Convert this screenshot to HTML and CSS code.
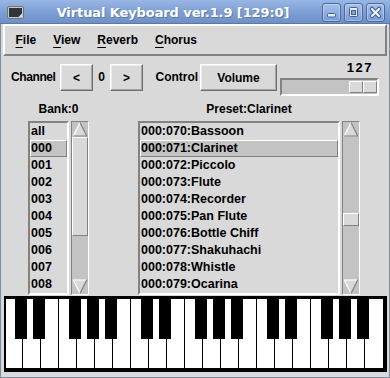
FILE: index.html
```html
<!DOCTYPE html>
<html>
<head>
<meta charset="utf-8">
<link rel="stylesheet" href="styles.css">
</head>
<body>
<div class="window">
  <div class="titlebar">
    <svg class="winicon" viewBox="0 0 17 13" width="17" height="13">
      <rect x="0.5" y="0.5" width="16" height="12" rx="1.5" fill="#c4c8cc" stroke="#6f757c"/>
      <rect x="2" y="2" width="13" height="9" fill="#30353a"/>
      <path d="M11.5 11 L15 7.5 L15 11 Z" fill="#d8dbde"/>
    </svg>
    <div class="title">Virtual Keyboard ver.1.9 [129:0]</div>
    <div class="wbtns">
      <div class="wbtn">
        <svg viewBox="0 0 17 17" width="17" height="17"><rect x="4.5" y="9.5" width="8" height="3.5" rx="1" fill="#e9eef8" stroke="#41609a"/></svg>
      </div>
      <div class="wbtn">
        <svg viewBox="0 0 17 17" width="17" height="17"><rect x="4.5" y="3.5" width="8" height="9" rx="1" fill="#e9eef8" stroke="#41609a"/><rect x="6.5" y="6.5" width="4" height="4" fill="#82a2d8" stroke="#41609a"/></svg>
      </div>
      <div class="wbtn">
        <svg viewBox="0 0 17 17" width="17" height="17"><path d="M5 5 L12 12 M12 5 L5 12" stroke="#41609a" stroke-width="4.5" stroke-linecap="round"/><path d="M5 5 L12 12 M12 5 L5 12" stroke="#e9eef8" stroke-width="2.4" stroke-linecap="round"/></svg>
      </div>
    </div>
  </div>

  <div class="menubar">
    <span class="menu"><u>F</u>ile</span>
    <span class="menu"><u>V</u>iew</span>
    <span class="menu"><u>R</u>everb</span>
    <span class="menu"><u>C</u>horus</span>
  </div>

  <div class="main">
    <div class="controls">
      <span class="lbl lbl-channel">Channel</span>
      <div class="btn btn-small">&lt;</div>
      <span class="lbl lbl-value">0</span>
      <div class="btn btn-small">&gt;</div>
      <span class="lbl lbl-control">Control</span>
      <div class="btn btn-volume">Volume</div>
      <div class="scale">
        <div class="scale-value">127</div>
        <div class="scale-trough">
          <div class="scale-thumb"><span class="half"></span><span class="half"></span></div>
        </div>
      </div>
    </div>

    <div class="lists">
      <div class="col">
        <div class="col-label">Bank:0</div>
        <div class="col-body">
          <div class="listbox lb-bank">
            <div class="row">all</div>
            <div class="row sel">000</div>
            <div class="row">001</div>
            <div class="row">002</div>
            <div class="row">003</div>
            <div class="row">004</div>
            <div class="row">005</div>
            <div class="row">006</div>
            <div class="row">007</div>
            <div class="row">008</div>
          </div>
          <div class="scrollbar">
            <svg class="arrow" viewBox="0 0 16 15" width="16" height="15"><polygon points="1,14.5 8,0.5 15,14.5" fill="#d9d9d9"/><path d="M1 14.5 L8 0.5" stroke="#fff" stroke-width="1.2"/><path d="M8 0.5 L15 14.5 M1 14 L15 14" stroke="#828282" stroke-width="1.2"/></svg>
            <div class="sb-trough"><div class="sb-thumb thumb-bank"></div></div>
            <svg class="arrow" viewBox="0 0 16 15" width="16" height="15"><polygon points="1,0.5 15,0.5 8,14.5" fill="#d9d9d9"/><path d="M1 1 L15 1 M1 0.5 L8 14.5" stroke="#fff" stroke-width="1.2"/><path d="M15 0.5 L8 14.5" stroke="#828282" stroke-width="1.2"/></svg>
          </div>
        </div>
      </div>

      <div class="col">
        <div class="col-label">Preset:Clarinet</div>
        <div class="col-body">
          <div class="listbox lb-preset">
            <div class="row">000:070:Bassoon</div>
            <div class="row sel">000:071:Clarinet</div>
            <div class="row">000:072:Piccolo</div>
            <div class="row">000:073:Flute</div>
            <div class="row">000:074:Recorder</div>
            <div class="row">000:075:Pan Flute</div>
            <div class="row">000:076:Bottle Chiff</div>
            <div class="row">000:077:Shakuhachi</div>
            <div class="row">000:078:Whistle</div>
            <div class="row">000:079:Ocarina</div>
          </div>
          <div class="scrollbar">
            <svg class="arrow" viewBox="0 0 16 15" width="16" height="15"><polygon points="1,14.5 8,0.5 15,14.5" fill="#d9d9d9"/><path d="M1 14.5 L8 0.5" stroke="#fff" stroke-width="1.2"/><path d="M8 0.5 L15 14.5 M1 14 L15 14" stroke="#828282" stroke-width="1.2"/></svg>
            <div class="sb-trough"><div class="sb-thumb thumb-preset"></div></div>
            <svg class="arrow" viewBox="0 0 16 15" width="16" height="15"><polygon points="1,0.5 15,0.5 8,14.5" fill="#d9d9d9"/><path d="M1 1 L15 1 M1 0.5 L8 14.5" stroke="#fff" stroke-width="1.2"/><path d="M15 0.5 L8 14.5" stroke="#828282" stroke-width="1.2"/></svg>
          </div>
        </div>
      </div>
    </div>

    <svg class="keyboard" viewBox="0 0 383 76" width="383" height="76">
      <rect x="0" y="0" width="383" height="76" fill="#000"/>
      <rect x="2" y="3" width="377" height="69" fill="#fff"/>
      <g fill="#000">
        <rect x="18" y="3" width="1" height="69"/>
        <rect x="36" y="3" width="1" height="69"/>
        <rect x="54" y="3" width="1" height="69"/>
        <rect x="72" y="3" width="1" height="69"/>
        <rect x="90" y="3" width="1" height="69"/>
        <rect x="108" y="3" width="1" height="69"/>
        <rect x="126" y="3" width="1" height="69"/>
        <rect x="144" y="3" width="1" height="69"/>
        <rect x="162" y="3" width="1" height="69"/>
        <rect x="180" y="3" width="1" height="69"/>
        <rect x="198" y="3" width="1" height="69"/>
        <rect x="216" y="3" width="1" height="69"/>
        <rect x="234" y="3" width="1" height="69"/>
        <rect x="252" y="3" width="1" height="69"/>
        <rect x="270" y="3" width="1" height="69"/>
        <rect x="288" y="3" width="1" height="69"/>
        <rect x="306" y="3" width="1" height="69"/>
        <rect x="324" y="3" width="1" height="69"/>
        <rect x="342" y="3" width="1" height="69"/>
        <rect x="360" y="3" width="1" height="69"/>
      </g>
      <g fill="#000">
        <rect x="11" y="0" width="12" height="43"/>
        <rect x="29" y="0" width="12" height="43"/>
        <rect x="65" y="0" width="12" height="43"/>
        <rect x="83" y="0" width="12" height="43"/>
        <rect x="101" y="0" width="12" height="43"/>
        <rect x="137" y="0" width="12" height="43"/>
        <rect x="155" y="0" width="12" height="43"/>
        <rect x="191" y="0" width="12" height="43"/>
        <rect x="209" y="0" width="12" height="43"/>
        <rect x="227" y="0" width="12" height="43"/>
        <rect x="263" y="0" width="12" height="43"/>
        <rect x="281" y="0" width="12" height="43"/>
        <rect x="317" y="0" width="12" height="43"/>
        <rect x="335" y="0" width="12" height="43"/>
        <rect x="353" y="0" width="12" height="43"/>
      </g>
    </svg>
  </div>
</div>
</body>
</html>
```

FILE: styles.css
```css
html, body {
  margin: 0;
  padding: 0;
  background: #d9d9d9;
}

.window {
  width: 390px;
  height: 378px;
  display: flex;
  flex-direction: column;
  background: #d9d9d9;
  box-shadow: inset 1px 0 #7c8aa3, inset -1px 0 #7c8aa3, inset 0 -1px #7c8aa3;
  font-family: "Liberation Sans", Arial, sans-serif;
  font-weight: bold;
  font-size: 12px;
  color: #000;
  overflow: hidden;
}

/* ---------- title bar ---------- */
.titlebar {
  height: 24px;
  flex: none;
  display: flex;
  align-items: center;
  background: linear-gradient(#98b6e5, #7b9dd4 55%, #6c8fc9);
  box-shadow: inset 0 -1px #5b77a8;
}

.winicon {
  flex: none;
  display: block;
  margin-left: 7px;
  margin-top: 1px;
}

.title {
  flex: 1;
  text-align: center;
  color: #fff;
  font-family: "DejaVu Sans", sans-serif;
  font-weight: bold;
  font-size: 13px;
  letter-spacing: -0.1px;
  white-space: nowrap;
  text-shadow: 1px 1px 0 rgba(40, 60, 100, 0.35);
}

.wbtns {
  flex: none;
  display: flex;
  gap: 3px;
  margin-right: 5px;
}

.wbtn {
  width: 19px;
  height: 19px;
  box-sizing: border-box;
  border: 1px solid #4b6aa0;
  border-radius: 3px;
  background: linear-gradient(#a6c0ea, #7b9dd4);
  box-shadow: inset 0 0 0 1px rgba(255, 255, 255, 0.3);
}

.wbtn svg {
  display: block;
}

/* ---------- menubar ---------- */
.menubar {
  flex: none;
  height: 32px;
  margin: 0 3px;
  box-sizing: border-box;
  border: 2px solid;
  border-color: #fff #828282 #828282 #fff;
  display: flex;
  align-items: center;
  padding-left: 2px;
}

.menu {
  padding: 0 8.5px;
}

.menu u {
  text-decoration: underline;
  text-decoration-thickness: 1px;
  text-underline-offset: 3px;
}

/* ---------- main ---------- */
.main {
  flex: 1;
  display: flex;
  flex-direction: column;
  padding-top: 6px;
}

.controls {
  display: flex;
  align-items: flex-start;
  height: 36px;
  padding-left: 11px;
}

.lbl {
  line-height: 27px;
  margin-top: 2px;
  white-space: nowrap;
}

.lbl-channel {
  width: 44px;
  margin-right: 5px;
  letter-spacing: -0.4px;
}

.lbl-value {
  width: 17px;
  text-align: center;
}

.lbl-control {
  width: 44.5px;
  margin-left: 12.5px;
}

.btn {
  height: 27px;
  margin-top: 2px;
  box-sizing: border-box;
  border: 1px solid;
  border-color: #fff #6f6f6f #6f6f6f #fff;
  box-shadow: inset -1px -1px #a6a6a6, inset 1px 1px #ececec;
  display: flex;
  align-items: center;
  justify-content: center;
}

.btn-small {
  width: 33px;
}

.btn-volume {
  width: 77px;
}

.scale {
  width: 99px;
  margin-left: 3px;
  display: flex;
  flex-direction: column;
}

.scale-value {
  height: 11px;
  line-height: 11px;
  text-align: right;
  padding-right: 6px;
  font-size: 13px;
  letter-spacing: 1.5px;
}

.scale-trough {
  margin-top: 5px;
  height: 18px;
  box-sizing: border-box;
  border: 2px solid;
  border-color: #828282 #fff #fff #828282;
  background: #c3c3c3;
  display: flex;
  justify-content: flex-end;
  align-items: stretch;
}

.scale-thumb {
  display: flex;
  margin: 1px 0;
}

.half {
  width: 14px;
  box-sizing: border-box;
  border: 1px solid;
  border-color: #fff #828282 #828282 #fff;
  background: #d9d9d9;
}

/* ---------- lists ---------- */
.lists {
  display: flex;
  gap: 49px;
  padding-left: 28px;
  margin-top: 4px;
}

.col {
  display: flex;
  flex-direction: column;
  align-items: center;
}

.col-label {
  height: 14px;
  line-height: 14px;
  white-space: nowrap;
}

.col-body {
  display: flex;
  gap: 2px;
  margin-top: 5px;
}

.listbox {
  height: 174px;
  box-sizing: border-box;
  border: 2px solid;
  border-color: #828282 #fff #fff #828282;
  font-size: 12.5px;
  overflow: hidden;
}

.lb-bank {
  width: 41px;
}

.lb-preset {
  width: 202px;
}

.row {
  height: 17px;
  line-height: 17px;
  padding-left: 1px;
  box-sizing: border-box;
  white-space: nowrap;
  overflow: hidden;
}

.row.sel {
  background: #c3c3c3;
  border: 1px solid;
  border-color: #fff #828282 #828282 #fff;
  line-height: 15px;
  padding-left: 0;
}

.scrollbar {
  width: 18px;
  height: 174px;
  box-sizing: border-box;
  border: 1px solid;
  border-color: #828282 #fff #fff #828282;
  background: #c3c3c3;
  display: flex;
  flex-direction: column;
}

.arrow {
  display: block;
  flex: none;
}

.sb-trough {
  flex: 1;
}

.sb-thumb {
  box-sizing: border-box;
  border: 1px solid;
  border-color: #fff #828282 #828282 #fff;
  background: #d9d9d9;
}

.thumb-bank {
  height: 99px;
}

.thumb-preset {
  margin-top: 76px;
  height: 13px;
}

/* ---------- keyboard ---------- */
.keyboard {
  display: block;
  flex: none;
  margin-left: 4px;
  margin-top: 1px;
}
```
